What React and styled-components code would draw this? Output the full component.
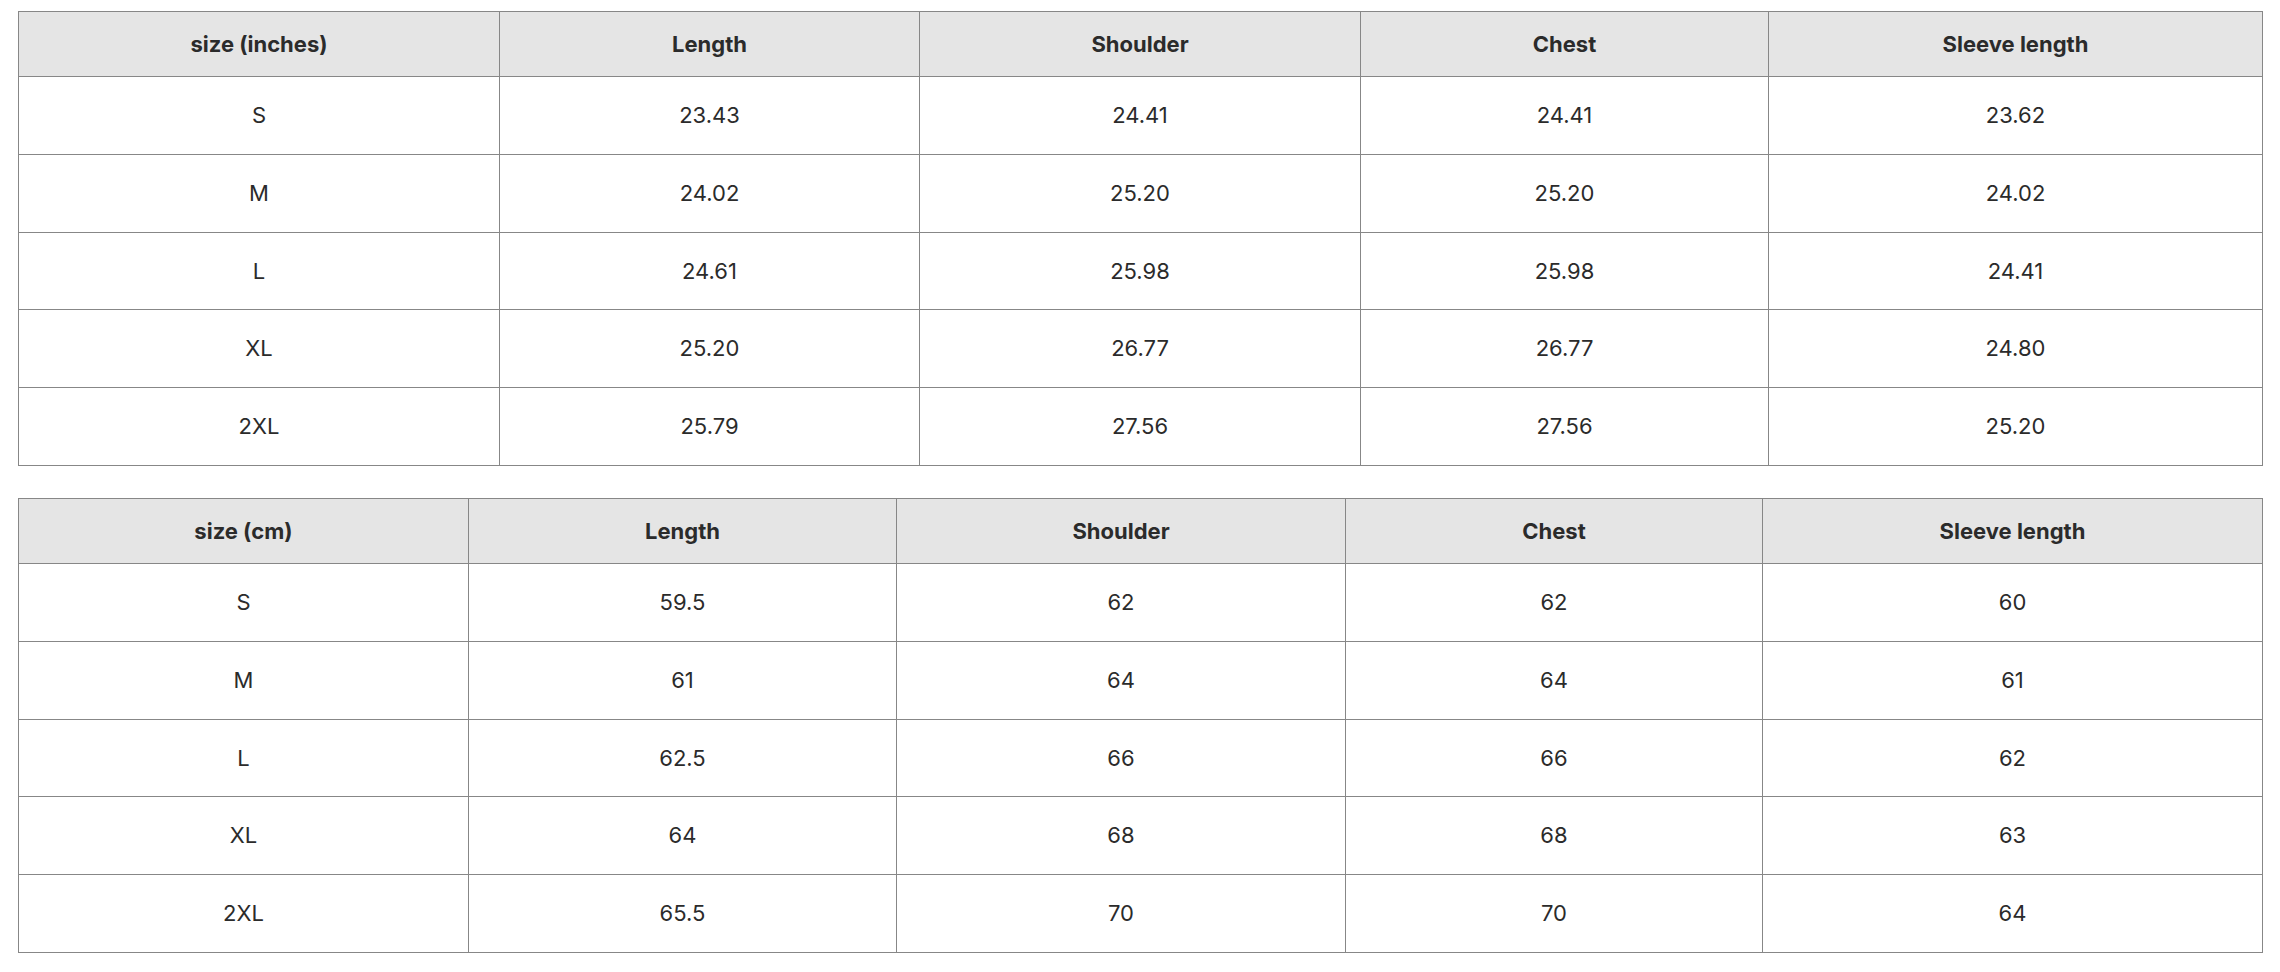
import React from 'react';
import styled, { createGlobalStyle } from 'styled-components';

const GlobalStyle = createGlobalStyle`
  html, body {
    margin: 0;
    padding: 0;
    background: #ffffff;
  }
  body {
    font-family: Inter, "Liberation Sans", Arial, sans-serif;
    color: #2b2b2b;
  }
`;

const Page = styled.div`
  padding: 11px 18px 0 18px;
  display: flex;
  flex-direction: column;
  gap: 32px;
`;

const Table = styled.table`
  width: 100%;
  border-collapse: collapse;
  table-layout: fixed;
  font-size: 22px;
  line-height: 26.8px;
`;

const Col = styled.col`
  width: ${props => props.w}px;
`;

const HeadCell = styled.th`
  background-color: #e5e5e5;
  border: 1px solid #878787;
  padding: 18.6px 8px;
  font-weight: 700;
  text-align: center;
  color: #2b2b2b;
`;

const Cell = styled.td`
  border: 1px solid #878787;
  padding: 25px 8px;
  font-weight: 400;
  text-align: center;
  color: #2b2b2b;
`;

const columns = ['Length', 'Shoulder', 'Chest', 'Sleeve length'];

const inches = [
  ['S', '23.43', '24.41', '24.41', '23.62'],
  ['M', '24.02', '25.20', '25.20', '24.02'],
  ['L', '24.61', '25.98', '25.98', '24.41'],
  ['XL', '25.20', '26.77', '26.77', '24.80'],
  ['2XL', '25.79', '27.56', '27.56', '25.20'],
];

const cm = [
  ['S', '59.5', '62', '62', '60'],
  ['M', '61', '64', '64', '61'],
  ['L', '62.5', '66', '66', '62'],
  ['XL', '64', '68', '68', '63'],
  ['2XL', '65.5', '70', '70', '64'],
];

const SizeTable = ({ unit, widths, rows }) => (
  <Table>
    <colgroup>
      {widths.map((w, i) => (
        <Col key={i} w={w} />
      ))}
    </colgroup>
    <thead>
      <tr>
        <HeadCell>size ({unit})</HeadCell>
        {columns.map(c => (
          <HeadCell key={c}>{c}</HeadCell>
        ))}
      </tr>
    </thead>
    <tbody>
      {rows.map(row => (
        <tr key={row[0]}>
          {row.map((v, i) => (
            <Cell key={i}>{v}</Cell>
          ))}
        </tr>
      ))}
    </tbody>
  </Table>
);

const App = () => (
  <>
    <GlobalStyle />
    <Page>
      <SizeTable unit="inches" widths={[481, 420, 441, 408, 494]} rows={inches} />
      <SizeTable unit="cm" widths={[450, 428, 449, 417, 500]} rows={cm} />
    </Page>
  </>
);

export default App;
